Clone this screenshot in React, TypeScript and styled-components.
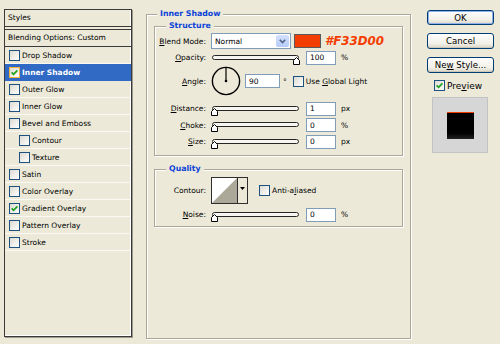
import styled, { createGlobalStyle, css } from "styled-components";

const GlobalStyle = createGlobalStyle`
  html, body {
    margin: 0;
    padding: 0;
    background: #ece9d8;
  }
  body {
    font-family: "DejaVu Sans", Verdana, sans-serif;
    font-size: 7.5px;
    color: #000;
  }
`;

const Dialog = styled.div`
  display: flex;
  align-items: flex-start;
  width: 500px;
  height: 344px;
  background: #ece9d8;
  overflow: hidden;
`;

/* ---------- left styles list ---------- */

const StylesPanel = styled.div`
  box-sizing: border-box;
  flex: none;
  width: 128px;
  height: 328px;
  margin: 9px 0 0 4px;
  border: 1px solid #3a3a3a;
  box-shadow: 1px 1px 0 #9d9a8c, inset -1px -1px 0 #fff;
  display: flex;
  flex-direction: column;
`;

const PanelHeader = styled.div<{ $second?: boolean }>`
  height: 16px;
  line-height: 16px;
  padding-left: 3px;
  border-bottom: 1px solid #3a3a3a;
  ${(p) =>
    p.$second &&
    css`
      margin-top: 2px;
      border-top: 1px solid #3a3a3a;
    `}
`;

const StyleRow = styled.div<{ $indent?: boolean; $active?: boolean }>`
  display: flex;
  align-items: center;
  gap: 2px;
  height: 16px;
  padding-left: ${(p) => (p.$indent ? 14 : 4)}px;
  border-bottom: 1px solid #faf9f3;
  ${(p) =>
    p.$active &&
    css`
      background: #316ac5;
      border-bottom-color: #316ac5;
      color: #fff;
      font-weight: bold;
    `}
`;

const Box = styled.span<{ $hot?: boolean }>`
  box-sizing: border-box;
  flex: none;
  width: 11px;
  height: 11px;
  border: 1px solid ${(p) => (p.$hot ? "#f2b33c" : "#1c5180")};
  background: linear-gradient(135deg, #dcdad0, #fff);
  display: inline-flex;
  align-items: center;
  justify-content: center;
`;

const Check = ({ checked, hot }: { checked?: boolean; hot?: boolean }) => (
  <Box $hot={hot}>
    {checked && (
      <svg width="7" height="7" viewBox="0 0 7 7">
        <path d="M0.6 3.4 L2.6 5.4 L6.4 1.4" stroke="#21a121" strokeWidth="1.7" fill="none" />
      </svg>
    )}
  </Box>
);

const styleItems = [
  { name: "Drop Shadow" },
  { name: "Inner Shadow", checked: true, active: true },
  { name: "Outer Glow" },
  { name: "Inner Glow" },
  { name: "Bevel and Emboss" },
  { name: "Contour", indent: true },
  { name: "Texture", indent: true },
  { name: "Satin" },
  { name: "Color Overlay" },
  { name: "Gradient Overlay", checked: true },
  { name: "Pattern Overlay" },
  { name: "Stroke" },
];

/* ---------- group boxes ---------- */

const Group = styled.fieldset<{ $h: number }>`
  box-sizing: border-box;
  min-width: 0;
  margin: 0;
  padding: 0;
  height: ${(p) => p.$h}px;
  border: 1px solid #aca899;
  box-shadow: inset 1px 1px 0 #fff, 1px 1px 0 #fff;
`;

const OuterGroup = styled(Group)`
  flex: none;
  width: 265px;
  margin: 8px 0 0 14px;
  padding: 0 7px;
`;

const InnerGroup = styled(Group)`
  width: 249px;
  & + & {
    margin-top: 7px;
  }
`;

const Legend = styled.legend<{ $x: number }>`
  margin-left: ${(p) => p.$x}px;
  padding: 0 3px;
  font-weight: bold;
  font-size: 7.8px;
  line-height: 12px;
  color: #0b42d8;
  background: #ece9d8;
`;

const Field = styled.div<{ $h: number; $top?: number }>`
  display: flex;
  align-items: center;
  height: ${(p) => p.$h}px;
  margin-top: ${(p) => p.$top ?? 0}px;
  white-space: nowrap;
`;

const Label = styled.span`
  flex: none;
  width: 51px;
  margin-right: 5px;
  text-align: right;
`;

/* ---------- controls ---------- */

const Select = styled.div`
  box-sizing: border-box;
  display: flex;
  align-items: center;
  width: 80px;
  height: 16px;
  padding: 0 1px 0 3px;
  border: 1px solid #7f9db9;
  background: #fff;
`;

const SelectText = styled.span`
  flex: 1;
`;

const DropButton = styled.span`
  display: flex;
  align-items: center;
  justify-content: center;
  width: 13px;
  height: 12px;
  border-radius: 2px;
  background: linear-gradient(#d4e0fd, #b6cbf9);
`;

const Swatch = styled.span`
  box-sizing: border-box;
  width: 27px;
  height: 14px;
  margin-left: 3px;
  border: 1px solid #5a5a5a;
  background: #f33d00;
`;

const HexText = styled.span`
  margin-left: 4px;
  font-size: 11.8px;
  font-weight: bold;
  font-style: italic;
  color: #f33d00;
`;

const Slider = styled.div`
  position: relative;
  flex: none;
  width: 89px;
  height: 100%;
`;

const Track = styled.div`
  position: absolute;
  left: 1px;
  right: 1px;
  top: 50%;
  height: 5px;
  margin-top: -3px;
  box-sizing: border-box;
  border: 1px solid #262626;
  border-radius: 3px;
  background: #f6f5ef;
`;

const Thumb = styled.svg<{ $end?: boolean }>`
  position: absolute;
  top: 50%;
  margin-top: -1px;
  left: ${(p) => (p.$end ? 82 : 0)}px;
`;

const NumInput = styled.input<{ $w?: number; $ml?: number }>`
  box-sizing: border-box;
  flex: none;
  width: ${(p) => p.$w ?? 30}px;
  height: 14px;
  margin: 0 0 0 ${(p) => p.$ml ?? 6}px;
  padding: 0 0 0 3px;
  border: 1px solid #7f9db9;
  background: #fff;
  font: inherit;
  color: #000;
  outline: none;
`;

const Unit = styled.span<{ $ml?: number }>`
  margin-left: ${(p) => p.$ml ?? 5}px;
`;

const CheckLabel = styled.span<{ $ml: number }>`
  display: flex;
  align-items: center;
  gap: 2px;
  margin-left: ${(p) => p.$ml}px;
`;

const ContourPicker = styled.div`
  box-sizing: border-box;
  display: flex;
  width: 37px;
  height: 27px;
  border: 1px solid #2e2e2e;
  background: #fff;
`;

const ContourArrow = styled.div`
  flex: 1;
  display: flex;
  justify-content: center;
  padding-top: 9px;
  border-left: 1px solid #2e2e2e;
  background: #ece9d8;
`;

/* ---------- right column ---------- */

const Side = styled.div`
  flex: none;
  display: flex;
  flex-direction: column;
  width: 67px;
  margin-left: 16px;
  font-size: 8.6px;
`;

const Button = styled.div<{ $h: number; $top: number; $default?: boolean }>`
  box-sizing: border-box;
  display: flex;
  align-items: center;
  justify-content: center;
  height: ${(p) => p.$h}px;
  margin-top: ${(p) => p.$top}px;
  border: 1px solid #003c74;
  border-radius: 3px;
  background: linear-gradient(#fff, #f1efe6 70%, #d9d4c6);
  box-shadow: ${(p) => (p.$default ? "inset 0 0 0 1px #8fb2ea" : "inset 0 -1px 0 #cdc7b8")};
`;

const PreviewToggle = styled.div`
  display: flex;
  align-items: center;
  gap: 2px;
  height: 11px;
  margin-top: 7px;
  padding-left: 7px;
  font-size: 9px;
`;

const PreviewBox = styled.div`
  box-sizing: border-box;
  display: flex;
  align-items: center;
  justify-content: center;
  width: 56px;
  height: 56px;
  margin: 6px 0 0 5px;
  border: 1px solid #c3c3c3;
  background: #d6d6d6;
`;

const PreviewSwatch = styled.div`
  box-sizing: border-box;
  width: 27px;
  height: 27px;
  border-top: 1px solid #f33d00;
  background: linear-gradient(#000 78%, #222);
`;

const SliderField = ({ value }: { value: "min" | "max" }) => (
  <Slider>
    <Track />
    <Thumb $end={value === "max"} width="7" height="8" viewBox="0 0 7 8">
      <path d="M0.5 7.5 V3.5 L3.5 0.5 L6.5 3.5 V7.5 Z" fill="#fff" stroke="#000" strokeWidth="1" />
    </Thumb>
  </Slider>
);

export default function App() {
  return (
    <>
      <GlobalStyle />
      <Dialog>
        <StylesPanel>
          <PanelHeader>Styles</PanelHeader>
          <PanelHeader $second>Blending Options: Custom</PanelHeader>
          {styleItems.map((it) => (
            <StyleRow key={it.name} $indent={it.indent} $active={it.active}>
              <Check checked={it.checked} hot={it.active} />
              <span>{it.name}</span>
            </StyleRow>
          ))}
        </StylesPanel>

        <OuterGroup $h={331}>
          <Legend $x={3}>Inner Shadow</Legend>

          <InnerGroup $h={136}>
            <Legend $x={11}>Structure</Legend>
            <Field $h={16} $top={1}>
              <Label>
                <u>B</u>lend Mode:
              </Label>
              <Select>
                <SelectText>Normal</SelectText>
                <DropButton>
                  <svg width="7" height="5" viewBox="0 0 7 5">
                    <path d="M0.8 0.8 L3.5 3.6 L6.2 0.8" stroke="#4d6185" strokeWidth="1.6" fill="none" />
                  </svg>
                </DropButton>
              </Select>
              <Swatch />
              <HexText>#F33D00</HexText>
            </Field>
            <Field $h={17}>
              <Label>
                <u>O</u>pacity:
              </Label>
              <SliderField value="max" />
              <NumInput readOnly value="100" />
              <Unit>%</Unit>
            </Field>
            <Field $h={30}>
              <Label>
                <u>A</u>ngle:
              </Label>
              <svg width="30" height="30" viewBox="0 0 30 30">
                <circle cx="15" cy="15" r="13.6" fill="none" stroke="#000" strokeWidth="1.4" />
                <line x1="15" y1="15" x2="15" y2="1.5" stroke="#000" strokeWidth="1.2" />
                <circle cx="15" cy="15" r="1.3" fill="#000" />
              </svg>
              <NumInput readOnly value="90" $w={35} $ml={4} />
              <Unit $ml={3}>°</Unit>
              <CheckLabel $ml={6}>
                <Check />
                <span>
                  Use <u>G</u>lobal Light
                </span>
              </CheckLabel>
            </Field>
            <Field $h={17} $top={4}>
              <Label>
                <u>D</u>istance:
              </Label>
              <SliderField value="min" />
              <NumInput readOnly value="1" />
              <Unit>px</Unit>
            </Field>
            <Field $h={16}>
              <Label>
                <u>C</u>hoke:
              </Label>
              <SliderField value="min" />
              <NumInput readOnly value="0" />
              <Unit>%</Unit>
            </Field>
            <Field $h={17}>
              <Label>
                <u>S</u>ize:
              </Label>
              <SliderField value="min" />
              <NumInput readOnly value="0" />
              <Unit>px</Unit>
            </Field>
          </InnerGroup>

          <InnerGroup $h={64}>
            <Legend $x={11}>Quality</Legend>
            <Field $h={28} $top={1}>
              <Label>Contour:</Label>
              <ContourPicker>
                <svg width="25" height="25" viewBox="0 0 25 25">
                  <path d="M0 25 L25 0 L25 25 Z" fill="#aca899" />
                </svg>
                <ContourArrow>
                  <svg width="5" height="3" viewBox="0 0 5 3">
                    <path d="M0 0 H5 L2.5 3 Z" fill="#000" />
                  </svg>
                </ContourArrow>
              </ContourPicker>
              <CheckLabel $ml={11}>
                <Check />
                <span>
                  Anti-a<u>l</u>iased
                </span>
              </CheckLabel>
            </Field>
            <Field $h={17} $top={2}>
              <Label>
                <u>N</u>oise:
              </Label>
              <SliderField value="min" />
              <NumInput readOnly value="0" />
              <Unit>%</Unit>
            </Field>
          </InnerGroup>
        </OuterGroup>

        <Side>
          <Button $h={15} $top={10} $default>
            OK
          </Button>
          <Button $h={16} $top={8}>
            Cancel
          </Button>
          <Button $h={16} $top={8}>
            <span>
              Ne<u>w</u> Style...
            </span>
          </Button>
          <PreviewToggle>
            <Check checked />
            <span>
              Pre<u>v</u>iew
            </span>
          </PreviewToggle>
          <PreviewBox>
            <PreviewSwatch />
          </PreviewBox>
        </Side>
      </Dialog>
    </>
  );
}
